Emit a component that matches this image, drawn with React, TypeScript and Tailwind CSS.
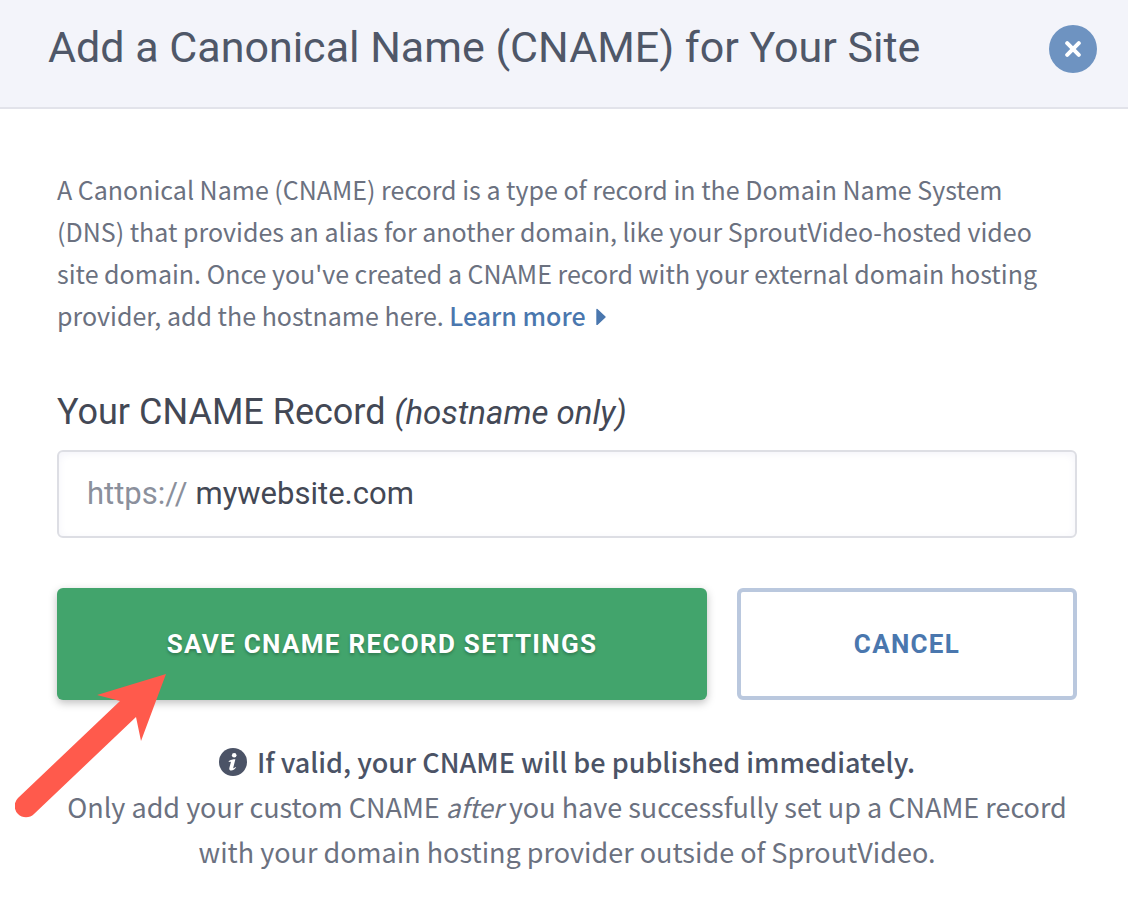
import { useState } from "react";

function CloseIcon() {
  return (
    <svg viewBox="0 0 16 16" className="h-4 w-4" aria-hidden="true">
      <path
        d="M2.2 2.2L13.8 13.8M13.8 2.2L2.2 13.8"
        stroke="currentColor"
        strokeWidth="4"
        strokeLinecap="round"
      />
    </svg>
  );
}

function CaretIcon() {
  return (
    <svg
      viewBox="0 0 10 18"
      className="ml-2.5 inline-block h-[18px] w-[10px] align-baseline"
      aria-hidden="true"
    >
      <path
        d="M1 1.6v14.8L9 9z"
        fill="currentColor"
        stroke="currentColor"
        strokeWidth="1.4"
        strokeLinejoin="round"
      />
    </svg>
  );
}

function InfoIcon() {
  return (
    <svg viewBox="0 0 28 28" className="h-7 w-7 shrink-0" aria-hidden="true">
      <circle cx="14" cy="14" r="14" fill="#4b5366" />
      <circle cx="15.2" cy="7.2" r="2.3" fill="#fff" />
      <path
        d="M9.6 13.2c2-1.4 4.2-1.9 6.8-1.9l-2.1 8.2c-.2.8.2.9.8.5l1.5-1.1.4.7c-1.4 1.8-3 2.9-4.7 2.9-1.7 0-2.3-1.1-1.9-2.7l1.4-5.2c.2-.8-.2-1-.9-.8l-1 .3z"
        fill="#fff"
      />
    </svg>
  );
}

function PointerArrow() {
  return (
    <svg
      viewBox="0 0 152 144"
      className="pointer-events-none absolute top-[86px] -left-[42px] h-36 w-[152px]"
      aria-hidden="true"
    >
      <path
        d="M151 0L126 67L121 43L19 140A11 11 0 0 1 3 124L105 27L82 21Z"
        fill="#ff5a4c"
      />
    </svg>
  );
}

export default function App() {
  const [hostname, setHostname] = useState("mywebsite.com");

  const handleSubmit = (e: React.FormEvent) => {
    e.preventDefault();
  };

  return (
    <main className="min-h-screen bg-white font-['Noto_Sans_CJK_SC',sans-serif] text-[25px] text-[#6b7180]">
      {/* Header */}
      <header className="flex items-start justify-between border-b-2 border-[#e2e3ea] bg-[#f3f4fa] pt-5 pr-[31px] pb-[33px] pl-12">
        <h1 className="font-[Roboto,sans-serif] text-[43px] leading-[54px] text-[#4f5768]">
          Add a Canonical Name (CNAME) for Your Site
        </h1>
        <button
          type="button"
          aria-label="Close"
          className="mt-[5px] flex h-12 w-12 shrink-0 items-center justify-center rounded-full bg-[#6e93c1] text-white"
        >
          <CloseIcon />
        </button>
      </header>

      <form onSubmit={handleSubmit} className="pt-[59px] pr-[51px] pl-[57px]">
        <p className="pr-6 leading-[42px]">
          A Canonical Name (CNAME) record is a type of record in the Domain Name
          System (DNS) that provides an alias for another domain, like your
          SproutVideo-hosted video site domain. Once you've created a CNAME
          record with your external domain hosting provider, add the hostname
          here.{" "}
          <a href="#" className="font-medium whitespace-nowrap text-[#4a77ae]">
            Learn more
            <CaretIcon />
          </a>
        </p>

        {/* Hostname */}
        <label
          htmlFor="hostname"
          className="mt-[52px] block font-[Roboto,sans-serif] text-[36px] leading-[48px] text-[#434855]"
        >
          Your CNAME Record{" "}
          <em className="text-[33px]">(hostname only)</em>
        </label>
        <div className="mt-[13px] flex h-22 items-center rounded-md border-2 border-[#dddee4] px-7 font-[Roboto,sans-serif] text-[31px] shadow-[inset_0_2px_8px_#f3f3f9]">
          <span className="text-[#8b909c]">https://</span>
          <input
            id="hostname"
            type="text"
            value={hostname}
            onChange={(e) => setHostname(e.target.value)}
            className="ml-2 min-w-0 flex-1 bg-transparent text-[#434855] outline-none"
          />
        </div>

        {/* Action buttons */}
        <div className="relative mt-[50px] grid grid-cols-[65fr_34fr] gap-[30px] font-[Roboto,sans-serif] text-[26px] font-bold">
          <button
            type="submit"
            className="h-28 rounded-md bg-[#42a46c] tracking-wider text-white shadow-[0_3px_8px_#00000040] text-shadow-[0_2px_3px_#00000040]"
          >
            SAVE CNAME RECORD SETTINGS
          </button>
          <button
            type="button"
            className="h-28 rounded-md border-4 border-[#bac8de] bg-white tracking-wider text-[#4a77ae]"
          >
            CANCEL
          </button>
          <PointerArrow />
        </div>

        {/* Publishing note */}
        <div className="mt-[39px] text-center text-[27px] leading-[45px]">
          <p className="flex items-center justify-center gap-2.5 font-medium text-[#4b5366]">
            <InfoIcon />
            If valid, your CNAME will be published immediately.
          </p>
          <p>
            Only add your custom CNAME <em className="text-[26px]">after</em>{" "}
            you have successfully set up a CNAME record with your domain hosting
            provider outside of SproutVideo.
          </p>
        </div>
      </form>
    </main>
  );
}
